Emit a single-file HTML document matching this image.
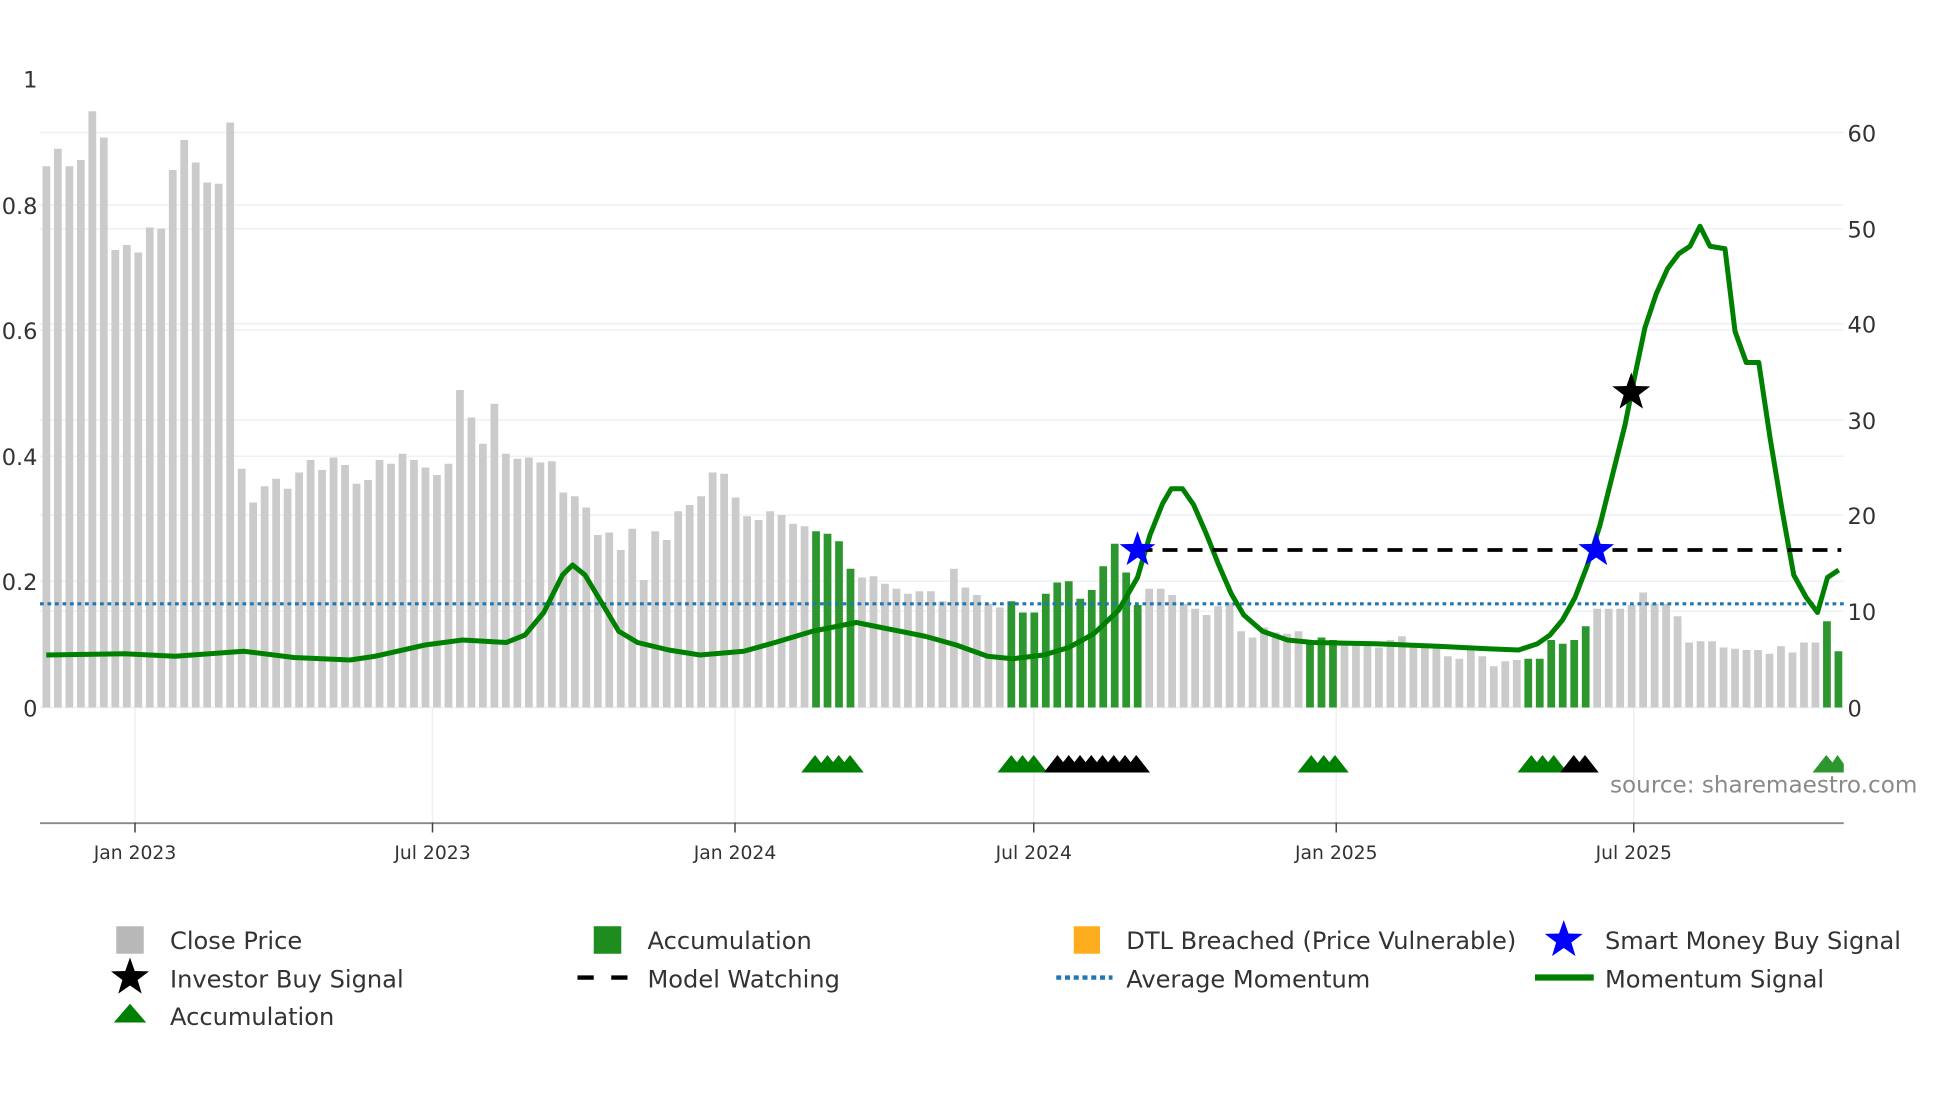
<!DOCTYPE html>
<html><head><meta charset="utf-8"><style>
html,body{margin:0;padding:0;background:#fff;width:1960px;height:1102px;overflow:hidden}
svg{display:block}
text{font-family:"DejaVu Sans","Liberation Sans",sans-serif}
</style></head><body>
<svg id="s" width="1960" height="1102" viewBox="0 0 1568 881.6" xmlns="http://www.w3.org/2000/svg">
<g stroke="#edf0f5" stroke-width="1.2">
<line x1="32" x2="1475" y1="106" y2="106"/><line x1="32" x2="1475" y1="183" y2="183"/><line x1="32" x2="1475" y1="259" y2="259"/><line x1="32" x2="1475" y1="336" y2="336"/><line x1="32" x2="1475" y1="412" y2="412"/><line x1="32" x2="1475" y1="489" y2="489"/>
<line x1="32" x2="1475" y1="164" y2="164"/><line x1="32" x2="1475" y1="264" y2="264"/><line x1="32" x2="1475" y1="365" y2="365"/><line x1="32" x2="1475" y1="465" y2="465"/><line x1="32" x2="1475" y1="566" y2="566"/>
<line x1="108" x2="108" y1="566" y2="658"/><line x1="346" x2="346" y1="566" y2="658"/><line x1="588" x2="588" y1="566" y2="658"/><line x1="827" x2="827" y1="566" y2="658"/><line x1="1069" x2="1069" y1="566" y2="658"/><line x1="1307" x2="1307" y1="566" y2="658"/>
</g>
<g id="bars"></g>
<line x1="32" x2="1475" y1="483" y2="483" stroke="#1f77b4" stroke-width="2.5" stroke-dasharray="3,3"/>
<polyline id="mom" fill="none" stroke="#008000" stroke-width="4" stroke-linejoin="round"/>
<line x1="910" x2="1473" y1="440" y2="440" stroke="#000" stroke-width="3" stroke-dasharray="12,8"/>
<g id="tri"></g>
<g id="stars"></g>
<line x1="32" x2="1475" y1="658.5" y2="658.5" stroke="#888" stroke-width="1.5"/>
<g stroke="#444" stroke-width="1.2"><line x1="108" x2="108" y1="658" y2="666"/><line x1="346" x2="346" y1="658" y2="666"/><line x1="588" x2="588" y1="658" y2="666"/><line x1="827" x2="827" y1="658" y2="666"/><line x1="1069" x2="1069" y1="658" y2="666"/><line x1="1307" x2="1307" y1="658" y2="666"/></g>
<g font-size="15" fill="#333" text-anchor="middle">
<text x="108" y="687">Jan 2023</text><text x="346" y="687">Jul 2023</text><text x="588" y="687">Jan 2024</text><text x="827" y="687">Jul 2024</text><text x="1069" y="687">Jan 2025</text><text x="1307" y="687">Jul 2025</text>
</g>
<g font-size="18" fill="#333" text-anchor="end">
<text x="30" y="70">1</text><text x="30" y="171">0.8</text><text x="30" y="271">0.6</text><text x="30" y="372">0.4</text><text x="30" y="472">0.2</text><text x="30" y="573">0</text>
</g>
<g font-size="18" fill="#333">
<text x="1478" y="113">60</text><text x="1478" y="190">50</text><text x="1478" y="266">40</text><text x="1478" y="343">30</text><text x="1478" y="419">20</text><text x="1478" y="496">10</text><text x="1478" y="573">0</text>
</g>
<text x="1288" y="634" font-size="18.5" fill="#8a8a8a">source: sharemaestro.com</text>
<g font-size="19.3" fill="#333">
<rect x="93" y="741" width="22" height="22" fill="#b8b8b8"/><text x="136" y="759">Close Price</text>
<rect x="475" y="741" width="22" height="22" fill="#1f8c1f"/><text x="518" y="759">Accumulation</text>
<rect x="859" y="741" width="21" height="22" fill="#fdad1e"/><text x="901" y="759">DTL Breached (Price Vulnerable)</text>
<text x="1284" y="759">Smart Money Buy Signal</text>
<text x="136" y="790">Investor Buy Signal</text>
<line x1="462" x2="508" y1="782" y2="782" stroke="#000" stroke-width="3.5" stroke-dasharray="13,14"/><text x="518" y="790">Model Watching</text>
<line x1="845" x2="890" y1="782" y2="782" stroke="#1f77b4" stroke-width="3.5" stroke-dasharray="4,3"/><text x="901" y="790">Average Momentum</text>
<line x1="1228" x2="1275" y1="782" y2="782" stroke="#008000" stroke-width="5"/><text x="1284" y="790">Momentum Signal</text>
<polygon points="91,818 104,803 117,818" fill="#008000"/><text x="136" y="820">Accumulation</text>
</g>
<g id="lstars"></g>
</svg>
<script>
var NS="http://www.w3.org/2000/svg";
function el(t,a,p){var e=document.createElementNS(NS,t);for(var k in a)e.setAttribute(k,a[k]);document.getElementById(p).appendChild(e);return e;}
var tops=[133,119,133,128,89,110,200,196,202,182,183,136,112,130,146,147,98,375,402,389,383,391,378,368,376,366,372,387,384,368,371,363,368,374,380,371,312,334,355,323,363,367,366,370,369,394,397,406,428,426,440,423,464,425,432,409,404,397,378,379,398,413,416,409,412,419,421,425,427,433,455,462,461,467,471,475,473,473,481,455,470,476,483,486,481,490,490,475,466,465,479,472,453,435,458,484,471,471,476,483,487,492,485,482,505,510,502,506,507,505,512,510,512,514,514,515,518,512,509,515,516,517,525,527,520,525,533,529,528,527,527,512,515,512,501,487,487,487,484,474,483,483,493,514,513,513,518,519,520,520,523,517,522,514,514,497,521];
var green={};[67,68,69,70,84,85,86,87,88,89,90,91,92,93,94,95,110,111,112,129,130,131,132,133,134,155,156].forEach(function(i){green[i]=1});
tops.forEach(function(t,i){var x=34+i*9.19;el("rect",{x:x.toFixed(2),y:t,width:6.2,height:566-t,fill:green[i]?"#2e962e":"#cbcbcb"},"bars");});
var pts=[[37,524],[100,523],[140,525],[195,521],[235,526],[280,528],[300,525],[340,516],[370,512],[405,514],[420,508],[435,490],[450,460],[458,452],[468,460],[480,480],[495,505],[510,514],[535,520],[560,524],[595,521],[620,514],[650,505],[685,498],[710,503],[740,509],[765,516],[790,525],[810,527],[835,524],[855,518],[875,507],[895,488],[910,462],[920,428],[930,403],[937,391],[946,391],[955,404],[965,427],[975,452],[985,475],[995,492],[1010,505],[1030,512],[1050,514],[1100,515],[1150,517],[1190,519],[1215,520],[1230,515],[1240,508],[1250,496],[1260,478],[1270,452],[1280,420],[1290,380],[1300,340],[1308,300],[1316,262],[1325,235],[1334,215],[1343,203],[1352,197],[1360,181],[1368,197],[1380,199],[1388,265],[1397,290],[1407,290],[1416,350],[1426,410],[1435,460],[1445,478],[1454,490],[1462,462],[1471,456]];
document.getElementById("mom").setAttribute("points",pts.map(function(p){return p.join(",")}).join(" "));
function tri(x,c){el("polygon",{points:(x-11)+",618 "+x+",604 "+(x+11)+",618",fill:c},"tri");}
[652,662,671,680].forEach(function(x){tri(x,"#008000")});
[809,818,827].forEach(function(x){tri(x,"#008000")});
[846,855,864,873,882,891,900,909].forEach(function(x){tri(x,"#000")});
[1049,1059,1068].forEach(function(x){tri(x,"#008000")});
[1225,1234,1243].forEach(function(x){tri(x,"#008000")});
[1259,1268].forEach(function(x){tri(x,"#000")});
el("polygon",{points:"1450,618 1461,604 1466,610 1470,604 1475,611 1475,618",fill:"#2e962e"},"tri");
function star(cx,cy,R,c,p){var r=R*0.4,s=[];for(var i=0;i<10;i++){var a=Math.PI/5*i-Math.PI/2,rr=i%2?r:R;s.push((cx+rr*Math.cos(a)).toFixed(1)+","+(cy+rr*Math.sin(a)).toFixed(1));}el("polygon",{points:s.join(" "),fill:c},p);}
star(910,440,15,"#0000ff","stars");star(1277,440,15,"#0000ff","stars");star(1305,314,16,"#000","stars");
star(1251,752,16,"#0000ff","lstars");star(104,782,16,"#000","lstars");
</script>
</body></html>
